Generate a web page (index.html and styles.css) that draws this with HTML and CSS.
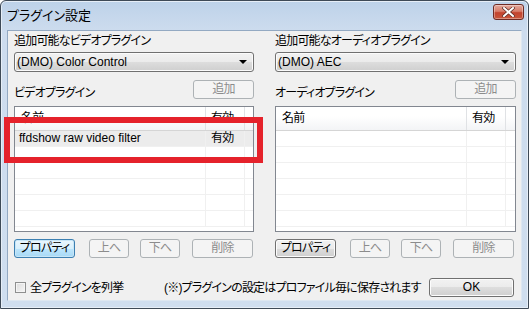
FILE: index.html
```html
<!DOCTYPE html>
<html lang="ja">

<head>
    <meta charset="UTF-8">
    <title>プラグイン設定</title>
    <link rel="stylesheet" href="styles.css">
</head>

<body>
    <div class="window">
        <div class="titlebar">
            <span class="title">プラグイン設定</span>
            <span class="close-btn">
                <svg width="13" height="10" viewBox="0 0 13 10">
                    <path d="M2 1 L11 9 M11 1 L2 9" stroke="#5a2a22" stroke-width="3.4" stroke-linecap="square" />
                    <path d="M2 1 L11 9 M11 1 L2 9" stroke="#fff" stroke-width="2" stroke-linecap="square" />
                </svg>
            </span>
        </div>

        <div class="client">
            <div class="columns">
                <!-- ビデオ -->
                <section class="panel">
                    <div class="caption">追加可能なビデオプラグイン</div>
                    <div class="combo"><span class="latin">(DMO) Color Control</span><i class="arrow"></i></div>
                    <div class="list-head">
                        <span class="caption">ビデオプラグイン</span>
                        <button class="btn wide" disabled>追加</button>
                    </div>
                    <div class="list">
                        <div class="row head"><span class="c-name">名前</span><span class="c-on">有効</span><span class="c-pad"></span></div>
                        <div class="row selected"><span class="c-name latin">ffdshow raw video filter</span><span class="c-on">有効</span><span class="c-pad"></span></div>
                        <div class="row"><span class="c-name"></span><span class="c-on"></span><span class="c-pad"></span></div>
                        <div class="row"><span class="c-name"></span><span class="c-on"></span><span class="c-pad"></span></div>
                        <div class="row"><span class="c-name"></span><span class="c-on"></span><span class="c-pad"></span></div>
                        <div class="row"><span class="c-name"></span><span class="c-on"></span><span class="c-pad"></span></div>
                        <div class="row"><span class="c-name"></span><span class="c-on"></span><span class="c-pad"></span></div>
                    </div>
                    <div class="actions">
                        <button class="btn wide focused">プロパティ</button>
                        <button class="btn small up" disabled>上へ</button>
                        <button class="btn small down" disabled>下へ</button>
                        <button class="btn wide del" disabled>削除</button>
                    </div>
                </section>

                <!-- オーディオ -->
                <section class="panel right">
                    <div class="caption">追加可能なオーディオプラグイン</div>
                    <div class="combo"><span class="latin">(DMO) AEC</span><i class="arrow"></i></div>
                    <div class="list-head">
                        <span class="caption">オーディオプラグイン</span>
                        <button class="btn wide" disabled>追加</button>
                    </div>
                    <div class="list">
                        <div class="row head"><span class="c-name">名前</span><span class="c-on">有効</span><span class="c-pad"></span></div>
                        <div class="row"><span class="c-name"></span><span class="c-on"></span><span class="c-pad"></span></div>
                        <div class="row"><span class="c-name"></span><span class="c-on"></span><span class="c-pad"></span></div>
                        <div class="row"><span class="c-name"></span><span class="c-on"></span><span class="c-pad"></span></div>
                        <div class="row"><span class="c-name"></span><span class="c-on"></span><span class="c-pad"></span></div>
                        <div class="row"><span class="c-name"></span><span class="c-on"></span><span class="c-pad"></span></div>
                        <div class="row"><span class="c-name"></span><span class="c-on"></span><span class="c-pad"></span></div>
                    </div>
                    <div class="actions">
                        <button class="btn wide">プロパティ</button>
                        <button class="btn small up" disabled>上へ</button>
                        <button class="btn small down" disabled>下へ</button>
                        <button class="btn wide del" disabled>削除</button>
                    </div>
                </section>
            </div>

            <div class="footer">
                <label class="check"><span class="box"></span>全プラグインを列挙</label>
                <span class="note">(※)プラグインの設定はプロファイル毎に保存されます</span>
                <button class="btn ok latin">OK</button>
            </div>
        </div>

        <!-- 赤枠 -->
        <div class="highlight"></div>
    </div>
</body>

</html>
```

FILE: styles.css
```css
html,
body {
    margin: 0;
    background: #fff;
}

body {
    font-family: "Liberation Sans", "Noto Sans CJK JP", sans-serif;
    font-size: 12px;
    font-feature-settings: "palt";
    letter-spacing: -0.8px;
    color: #000;
}

.latin {
    letter-spacing: 0;
}

.window {
    position: relative;
    width: 527px;
    height: 307px;
    border: 1px solid #3e4a57;
    border-radius: 6px 6px 0 0;
    background: linear-gradient(#bdd2e9, #cddcee 30px, #cfdeef);
    box-shadow: inset 0 0 0 1px #e6eef7;
}

.titlebar {
    height: 29px;
    display: flex;
    align-items: flex-start;
    justify-content: space-between;
}

.title {
    font-family: "Noto Sans CJK JP", sans-serif;
    font-size: 13px;
    line-height: 15px;
    letter-spacing: 0;
    margin: 6px 0 0 6px;
    color: #000;
}

.close-btn {
    width: 29px;
    height: 14px;
    margin: 3px 4px 0 0;
    border: 1px solid #6e2b24;
    border-radius: 3px;
    background: linear-gradient(#e3a99d, #d87d6a 45%, #c3432e 55%, #c8573c);
    box-shadow: inset 0 0 0 1px rgba(255, 255, 255, 0.35);
    display: flex;
    align-items: center;
    justify-content: center;
}

.client {
    margin: 0 6px 0 6px;
    height: 271px;
    box-sizing: border-box;
    border: 1px solid #93a9c2;
    border-bottom-color: #dde7f1;
    border-right-color: #dde7f1;
    background: #f0f0f0;
    padding: 3px 3px 0 6px;
}

.columns {
    display: flex;
    gap: 21px;
}

.panel {
    width: 240px;
}

.panel.right {
    width: 241px;
}

.caption {
    line-height: 14px;
    height: 14px;
    white-space: nowrap;
}

.combo {
    margin-top: 4px;
    height: 20px;
    box-sizing: border-box;
    border: 1px solid #707070;
    border-radius: 3px;
    background: linear-gradient(#f2f2f2 0%, #ebebeb 50%, #dddddd 50%, #cfcfcf 100%);
    box-shadow: inset 0 0 0 1px #fbfbfb;
    display: flex;
    align-items: center;
    justify-content: space-between;
    padding: 0 6px 0 2px;
    line-height: 14px;
}

.arrow {
    width: 0;
    height: 0;
    border-left: 4px solid transparent;
    border-right: 4px solid transparent;
    border-top: 4px solid #000;
}

.list-head {
    margin-top: 8px;
    height: 19px;
    display: flex;
    justify-content: space-between;
    align-items: flex-end;
}

.list-head .caption {
    margin-bottom: -1px;
}

.list {
    margin-top: 7px;
    height: 126px;
    box-sizing: border-box;
    border: 1px solid #828790;
    background: #fff;
    overflow: hidden;
}

.row {
    display: flex;
    height: 16px;
    box-sizing: border-box;
    border-bottom: 1px solid #f0f0f0;
    line-height: 15px;
}

.row span {
    box-sizing: border-box;
    border-right: 1px solid #f0f0f0;
    white-space: nowrap;
    overflow: hidden;
}

.c-name {
    width: 191px;
    padding-left: 4px;
}

.c-on {
    width: 39px;
    padding-left: 5px;
}

.c-pad {
    flex: 1;
    border-right: none !important;
}

.row.head {
    height: 24px;
    line-height: 22px;
    border-bottom: 1px solid #d5d5d5;
    background: linear-gradient(#fff 40%, #f3f4f6);
}

.row.head span {
    border-right-color: #e0e2e5;
}

.row.head .c-name {
    padding-left: 6px;
}

.row.selected {
    background: #ececec;
}

.actions {
    margin-top: 7px;
    display: flex;
}

.btn {
    font: inherit;
    letter-spacing: inherit;
    height: 19px;
    box-sizing: border-box;
    padding: 0;
    border: 1px solid #707070;
    border-radius: 3px;
    background: linear-gradient(#f2f2f2 0%, #ebebeb 50%, #dddddd 50%, #cfcfcf 100%);
    box-shadow: inset 0 0 0 1px #fcfcfc;
    color: #000;
    line-height: 15px;
}

.btn:disabled {
    background: #f4f4f4;
    border-color: #adb2b5;
    color: #8c8c8c;
    box-shadow: none;
}

.btn.focused {
    border-color: #3c7fb1;
    background: linear-gradient(#eaf6fd 0%, #d9f0fc 50%, #bee6fd 50%, #a7d9f5 100%);
    box-shadow: inset 0 0 0 1px #c8e6f7;
}

.btn.wide {
    width: 61px;
}

.btn.small {
    width: 40px;
}

.btn.up {
    margin-left: 14px;
}

.btn.down {
    margin-left: 11px;
}

.btn.del {
    margin-left: 12px;
}

.footer {
    margin-top: 20px;
    display: flex;
    align-items: center;
    height: 19px;
}

.check {
    width: 150px;
    display: flex;
    align-items: center;
    line-height: 14px;
    padding-left: 1px;
    box-sizing: border-box;
}

.box {
    width: 11px;
    height: 11px;
    box-sizing: border-box;
    border: 1px solid #8e8f8f;
    background: linear-gradient(135deg, #dcdcdc, #f6f6f6);
    box-shadow: inset 0 0 0 1px #f4f4f4;
    margin-right: 4px;
}

.note {
    line-height: 14px;
    white-space: nowrap;
}

.btn.ok {
    width: 85px;
    margin-left: auto;
    margin-right: 4px;
    letter-spacing: 0;
}

.highlight {
    position: absolute;
    left: 3px;
    top: 116px;
    width: 259px;
    height: 46px;
    box-sizing: border-box;
    border: 6px solid #e5222b;
}
```
